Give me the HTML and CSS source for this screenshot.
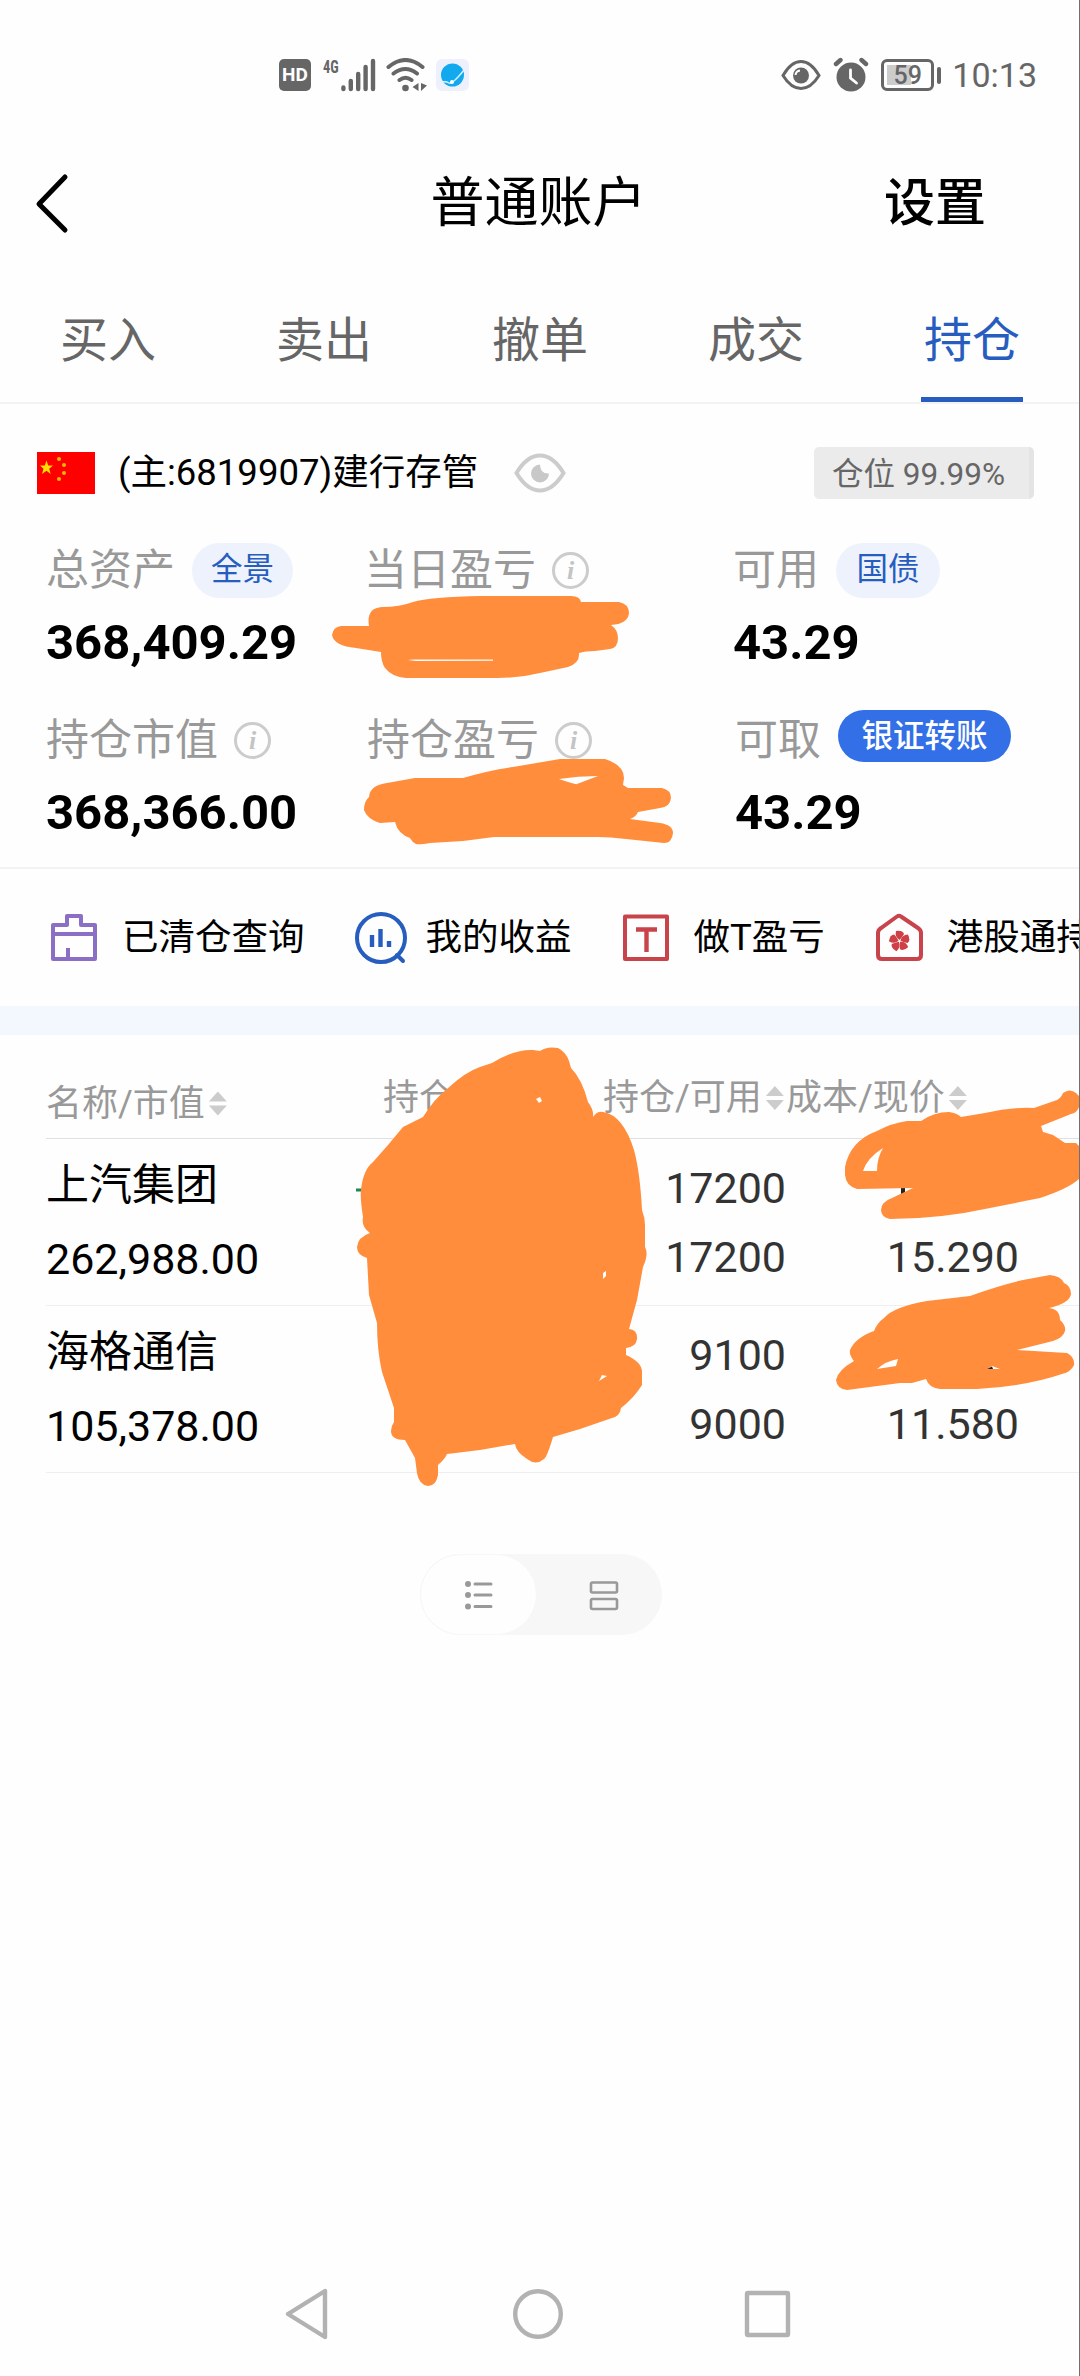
FILE: index.html
```html
<!DOCTYPE html>
<html lang="zh-CN">
<head>
<meta charset="utf-8">
<title>普通账户</title>
<link rel="stylesheet" href="styles.css">
</head>
<body>
<div class="screen">
  <div class="statusbar">
    <div class="status-left">
      <span class="hd">HD</span>
      <div class="signal">
        <span class="net">4G</span>
        <svg width="36" height="34" viewBox="0 0 36 34" stroke="#666" stroke-width="4.4" stroke-linecap="round"><path d="M2.4 29.5V31M9.8 23V31M17.2 16V31M24.6 9V31M32 3V31"/></svg>
      </div>
      <svg class="wifi" width="42" height="34" viewBox="0 0 42 34" fill="none" stroke="#666" stroke-width="4" stroke-linecap="round"><path d="M2.5 9Q19.500-5 36.500 9M7.500 15.500Q19.500 6.500 31 15.500M13.500 22Q19.500 17.500 25.500 22"/><circle cx="19.500" cy="30" r="3.300" fill="#666" stroke="none"/><path d="M32.500 25V33L26.500 29ZM35 25V33L41 27.500Z" fill="#666" stroke="none"/></svg>
      <svg class="app" width="34" height="34" viewBox="0 0 34 34"><rect x="0" y="1" width="33" height="32" rx="6" fill="#eef1fb"/><circle cx="16.500" cy="17" r="11.500" fill="#12a9ef"/><path d="M6 24Q10 23 13 25T28 12" fill="none" stroke="#d9f3ff" stroke-width="1.500"/><circle cx="16" cy="24" r="2" fill="#fff"/></svg>
    </div>
    <div class="status-right">
      <svg width="40" height="34" viewBox="0 0 40 34"><path d="M2 17.500Q10 3.500 20 3.500T38 17.500Q30 30.500 20 30.500T2 17.500Z" fill="none" stroke="#666" stroke-width="3"/><circle cx="20" cy="17.500" r="8" fill="#666"/><path d="M14.500 17Q15 13 19 12.500" fill="none" stroke="#fff" stroke-width="2"/></svg>
      <svg class="alarm" width="36" height="36" viewBox="0 0 36 36"><circle cx="18" cy="20" r="14.500" fill="#666"/><path d="M3 7L7.500 3M28.500 3L33 7" stroke="#666" stroke-width="4.400" stroke-linecap="round"/><path d="M17.500 13V21L23.500 26" fill="none" stroke="#fff" stroke-width="2.800" stroke-linecap="round"/></svg>
      <div class="battery"><span class="level">59</span></div>
      <span class="nub"></span>
      <span class="clock">10:13</span>
    </div>
  </div>

  <header class="titlebar">
    <svg class="back" width="36" height="62" viewBox="0 0 36 62" fill="none" stroke="#000" stroke-width="5" stroke-linecap="round" stroke-linejoin="round"><path d="M31 4L5 31L31 57"/></svg>
    <h1 class="title">普通账户</h1>
    <span class="settings">设置</span>
  </header>

  <nav class="tabs">
    <span class="tab">买入</span>
    <span class="tab">卖出</span>
    <span class="tab">撤单</span>
    <span class="tab">成交</span>
    <span class="tab tab-active">持仓</span>
  </nav>

  <section class="account">
    <svg class="flag" width="58" height="42" viewBox="0 0 58 42"><rect width="58" height="42" fill="#fe0000"/><path id="s" fill="#ffde00" d="M9.500 8.500L11.200 13.500H16L12.200 16.800L13.700 22L9.500 18.800L5 22L6.500 16.800L3 13.500H7.800Z"/><g fill="#f7b500"><circle cx="22" cy="7" r="2"/><circle cx="27" cy="13" r="2"/><circle cx="27" cy="21" r="2"/><circle cx="22" cy="27" r="2"/></g></svg>
    <span class="acct-name">(主:6819907)建行存管</span>
    <svg class="eye" width="52" height="40" viewBox="0 0 52 40"><path d="M2.500 20Q13 2.500 26 2.500T49.500 20Q39 37.500 26 37.500T2.500 20Z" fill="none" stroke="#ccc" stroke-width="4"/><path d="M26 11.500A9 9 0 1 0 35 20.500Q26 21 26 11.500Z" fill="#c8c8c8"/></svg>
    <span class="position">仓位 99.99%</span>
  </section>

  <section class="summary">
    <div class="cell">
      <div class="label">总资产<span class="pill">全景</span></div>
      <div class="amount">368,409.29</div>
    </div>
    <div class="cell cell-mid">
      <div class="label">当日盈亏<span class="info">i</span></div>
    </div>
    <div class="cell cell-end">
      <div class="label">可用<span class="pill pill-wide">国债</span></div>
      <div class="amount">43.29</div>
    </div>
  </section>
  <section class="summary summary-second">
    <div class="cell">
      <div class="label">持仓市值<span class="info info-near">i</span></div>
      <div class="amount">368,366.00</div>
    </div>
    <div class="cell cell-mid">
      <div class="label">持仓盈亏<span class="info">i</span></div>
    </div>
    <div class="cell cell-end">
      <div class="label">可取<span class="pill pill-solid">银证转账</span></div>
      <div class="amount">43.29</div>
    </div>
  </section>

  <section class="shortcuts">
    <div class="shortcut s1"><svg width="52" height="54" viewBox="0 0 52 54" fill="none" stroke="#8b6fc4" stroke-width="4" stroke-linejoin="round"><path d="M5 14H19V5H33V14H47V48H5ZM5 23H47M20 48V37"/></svg>已清仓查询</div>
    <div class="shortcut s2"><svg width="54" height="54" viewBox="0 0 54 54" fill="none" stroke="#265dbe" stroke-width="4"><circle cx="27" cy="27" r="24"/><path d="M43 44L49 50" stroke-linecap="round"/><path d="M18 24V36M26.500 18V36M35 30V36" stroke-width="4.400"/></svg>我的收益</div>
    <div class="shortcut s3"><svg width="52" height="54" viewBox="0 0 52 54" fill="none" stroke="#c8444a" stroke-width="4" stroke-linejoin="round"><rect x="5" y="5.500" width="42" height="42.500"/><path d="M16 18.500H37M26.500 18.500V41" stroke-width="4.400"/></svg>做T盈亏</div>
    <div class="shortcut s4"><svg width="52" height="54" viewBox="0 0 52 54"><path d="M5 22Q5 19 8 17L24 5.500Q26 4 28 5.500L45 17Q48 19 48 22V44Q48 48 44 48H9Q5 48 5 44Z" fill="none" stroke="#c8444a" stroke-width="4"/><g fill="#cf3f46" transform="translate(26.500 30)"><path id="petal" d="M0-1Q-5-4-3.500-10Q3-11 4.500-7Q3-4 0-1Z"/><use href="#petal" transform="rotate(72)"/><use href="#petal" transform="rotate(144)"/><use href="#petal" transform="rotate(216)"/><use href="#petal" transform="rotate(288)"/></g></svg>港股通持仓</div>
  </section>

  <section class="holdings">
    <div class="row head">
      <span class="c1">名称/市值<i class="sort"></i></span>
      <span class="c2">持仓盈亏</span>
      <span class="c3">持仓/可用<i class="sort"></i></span>
      <span class="c4">成本/现价<i class="sort"></i></span>
    </div>
    <div class="row item">
      <div class="c1"><div class="name">上汽集团</div><div class="value">262,988.00</div></div>
      <div class="c3"><div class="num">17200</div><div class="num">17200</div></div>
      <div class="c4"><div class="num"></div><div class="num">15.290</div></div>
    </div>
    <div class="row item">
      <div class="c1"><div class="name">海格通信</div><div class="value">105,378.00</div></div>
      <div class="c3"><div class="num">9100</div><div class="num">9000</div></div>
      <div class="c4"><div class="num"></div><div class="num">11.580</div></div>
    </div>
  </section>

  <div class="switch">
    <span class="seg seg-on"><svg width="30" height="32" viewBox="0 0 30 32" stroke="#999" stroke-width="3" stroke-linecap="round"><path d="M11 5H27M11 16H27M11 27.500H27"/><g fill="#999" stroke="none"><circle cx="4" cy="5" r="3"/><circle cx="4" cy="16" r="3"/><circle cx="4" cy="27.500" r="3"/></g></svg></span>
    <span class="seg"><svg width="30" height="32" viewBox="0 0 30 32" fill="none" stroke="#999" stroke-width="2.600"><rect x="2" y="3.500" width="26" height="10" rx="1.500"/><rect x="2" y="20" width="26" height="10" rx="1.500"/></svg></span>
  </div>

  <footer class="navbar">
    <svg width="56" height="56" viewBox="0 0 56 56"><path d="M8 28L45 5V51Z"/></svg>
    <svg width="56" height="56" viewBox="0 0 56 56"><circle cx="28" cy="28" r="22.800"/></svg>
    <svg width="56" height="56" viewBox="0 0 56 56"><rect x="7" y="7" width="41" height="42" rx="1"/></svg>
  </footer>

  <svg class="ink" width="1080" height="2376" viewBox="0 0 1080 2376">
    <path d="M356 1190H364" stroke="#1c8a53" stroke-width="3"/>
    <path d="M903 1186V1194" stroke="#222" stroke-width="4"/>
    <g fill="#ff8d3b" fill-rule="evenodd" stroke-linejoin="round">
      <path d="M332 635Q333 627 341 626H369Q366 608 382 607Q400 607 413 602Q430 597 482 596H571Q580 596 581 602H619Q629 604 629 613Q628 624 611 625Q618 630 618 638Q618 648 610 649L595 651Q585 651 579 653Q580 663 568 667L540 673Q520 678 497 678H406Q392 677 385 668Q381 662 381 652L356 648Q334 646 332 635ZM408 660L416 661L493 660.700V659.500H413Z"/>
      <path d="M364 810Q364 801 369 797Q370 785 387 783L415 778H463Q490 770 513 767L560 759H605Q624 765 624 778L623 785L628 788H662Q671 790 671 798Q670 807 660 808L638 812Q636 817 630 819L660 823Q673 825 673 833Q672 843 664 843L626 839Q610 837 598 837H494L463 841L430 843Q420 845 416 844Q412 842 410 838Q398 834 395 822L380 823Q367 819 364 810ZM559 779Q576 785 577 784L598 776Q578 776 559 779Z"/>
      <path d="M492 1063Q515 1049 533 1050L540 1051Q547 1046 558 1048Q566 1052 569 1061L571 1068Q582 1079 588 1102Q594 1110 593 1117Q597 1111 603 1112Q623 1115 634 1150Q640 1172 642 1210Q645 1218 645 1225V1247Q649 1254 643 1267L637 1300L629 1329Q638 1330 637 1339Q636 1347 626 1348V1355Q642 1362 642 1372V1385Q634 1398 621 1408Q620 1416 612 1418L580 1429L553 1437Q547 1457 544 1459Q536 1466 527 1459Q516 1452 515 1444L480 1450L447 1454Q445 1459 438 1465V1475Q436 1486 428 1486Q419 1485 417 1473L415 1458L405 1440Q391 1440 391 1431Q391 1426 394 1422V1408L382 1372Q377 1350 377 1323L369 1295L367 1258Q357 1255 357 1247Q358 1237 370 1233Q361 1227 363 1217Q360 1198 361 1190Q363 1170 373 1162L388 1145L403 1127L423 1117Q435 1098 447 1089Q465 1072 480 1067ZM536 1099L539 1103L542 1101L540 1097ZM603 1273L603 1279L606 1276V1271ZM599 1381L607 1376L602 1375Z"/>
      <path d="M845 1167Q850 1141 877 1131Q892 1123 907 1121H921Q934 1112 949 1112Q957 1113 961 1117L985 1113Q1010 1107 1034 1108L1057 1100Q1061 1098 1063 1093Q1070 1088 1076 1093L1080 1097V1104Q1078 1113 1071 1114L1041 1126L1043 1132L1053 1135L1065 1143H1076L1080 1147V1178Q1070 1188 1040 1198L990 1208Q940 1219 890 1219Q881 1217 881 1210Q881 1202 892 1198L913 1188L857 1189Q846 1186 845 1175ZM863 1171Q867 1158 883 1148Q877 1158 877 1171Z"/>
      <path d="M836 1380Q838 1370 854 1361Q849 1355 850 1350Q855 1338 874 1331Q877 1323 884 1318Q893 1307 927 1301L970 1296Q1000 1285 1023 1280L1050 1275Q1061 1276 1064 1283Q1071 1286 1071 1294Q1070 1303 1049 1308Q1060 1309 1060 1320Q1066 1325 1065 1331Q1063 1338 1053 1341L1017 1350L1067 1353Q1075 1357 1074 1365Q1071 1372 1062 1374Q1027 1386 977 1389H940Q929 1388 926 1379L912 1383H900L847 1390Q837 1389 836 1380ZM877 1369Q886 1361 898 1359L896 1366ZM987 1369L992 1366L1000 1369Z"/>
    </g>
    <path d="M987 1369L992 1366.500L993 1369" fill="#222"/>
  </svg>
</div>
</body>
</html>
```
FILE: styles.css
```css
* { box-sizing: border-box; }
body { margin: 0; background: #fefefe; }
.screen {
  position: relative;
  width: 1080px;
  height: 2376px;
  overflow: hidden;
  display: flex;
  flex-direction: column;
  border-right: 1px solid #707070;
  background: #fefefe;
  color: #000;
  font-family: Roboto, "Noto Sans CJK SC", sans-serif;
  white-space: nowrap;
}
svg { display: block; flex: none; }

.statusbar {
  height: 150px;
  padding: 57px 42px 0 279px;
  display: flex;
  justify-content: space-between;
  align-items: flex-start;
  color: #666;
}
.status-left, .status-right { display: flex; align-items: center; height: 36px; }
.hd {
  width: 32px; height: 32px;
  border-radius: 5px;
  background: #666;
  color: #fff;
  font: 700 19px/32px Roboto, sans-serif;
  text-align: center;
}
.signal { display: flex; align-items: flex-start; margin-left: 12px; }
.net { width: 18px; font: 700 18px/18px "Roboto Condensed", Roboto, sans-serif; transform: scaleX(.8); transform-origin: left; }
.wifi { margin-left: 9px; }
.app { margin-left: 8px; }
.alarm { margin-left: 12px; }
.battery {
  width: 53px; height: 32px;
  margin-left: 12px;
  padding: 3px;
  border: 3px solid #666;
  border-radius: 6px;
}
.level {
  display: block;
  width: 41px; height: 20px;
  background: linear-gradient(90deg, #ccc 24px, transparent 24px);
  font: 500 25px/21px Roboto, sans-serif;
  text-align: center;
}
.nub { width: 4px; height: 17px; margin-left: 3px; border-radius: 2px; background: #666; }
.clock { margin-left: 11px; font-size: 34px; line-height: 36px; }

.titlebar {
  height: 130px;
  padding: 0 93px 22px 34px;
  display: grid;
  grid-template-columns: 300px 1fr 300px;
  align-items: center;
}
.title { margin: 0; padding-left: 57px; font-size: 54px; line-height: 80px; font-weight: 400; text-align: center; }
.settings { font-size: 51px; line-height: 80px; font-weight: 500; text-align: right; }

.tabs { height: 124px; display: flex; border-bottom: 2px solid #f3f3f3; margin-right: -1px; }
.tab {
  flex: 1;
  display: flex;
  flex-direction: column;
  align-items: center;
  padding-top: 26px;
  color: #666;
  font-size: 48px;
  line-height: 70px;
}
.tab-active { color: #265dbe; }
.tab-active::after { content: ""; width: 102px; height: 6px; margin-top: 21px; background: #265dbe; }

.account { height: 138px; padding: 43px 45px 43px 37px; display: flex; align-items: center; }
.flag { }
.acct-name { margin-left: 23px; font-size: 36.500px; line-height: 52px; }
.eye { margin-left: 36px; }
.position {
  width: 220px; height: 52px;
  margin-left: auto;
  padding-left: 18px;
  border-radius: 5px;
  background: linear-gradient(90deg, #ebebeb 215px, #e4e4e4 215px);
  color: #666;
  font-size: 31.500px;
  line-height: 56px;
}

.summary { display: grid; grid-template-columns: 318px 368px 1fr; padding-left: 46px; height: 170px; }
.summary-second { height: 155px; }
.cell { display: flex; flex-direction: column; }
.cell-end { padding-left: 1px; }
.summary-second .cell-mid, .summary-second .cell-end { padding-left: 3px; }
.label { display: flex; align-items: center; height: 56px; font-size: 43px; line-height: 56px; color: #999; }
.pill {
  width: 101px; height: 55px;
  margin-left: 17px;
  border-radius: 28px;
  background: #edf2fc;
  color: #265dbe;
  font-size: 31.500px;
  line-height: 54px;
  text-align: center;
}
.pill-wide { width: 104px; }
.pill-solid { width: 173px; height: 52px; margin-bottom: 8px; background: #336fe6; color: #fff; font-weight: 500; line-height: 53px; }
.info {
  width: 37px; height: 37px;
  margin-left: 16px;
  border: 3px solid #ccc;
  border-radius: 50%;
  color: #c4c4c4;
  font: italic 700 26px/31px "Liberation Serif", serif;
  text-align: center;
}
.amount { margin-top: 15px; font-size: 49px; line-height: 60px; font-weight: 700; }

.shortcuts {
  height: 168px;
  border-top: 2px solid #f3f3f3;
  border-bottom: 29px solid #f3f7fe;
  padding-left: 48px;
  display: flex;
  align-items: center;
  overflow: hidden;
  margin-right: -1px;
}
.shortcuts { padding-bottom: 0; }
.shortcut { display: flex; align-items: center; flex: none; gap: 22px; font-size: 36.500px; line-height: 54px; }
.s2 { margin-left: 49px; gap: 18px; }
.s3 { margin-left: 48px; }
.s4 { margin-left: 48px; }

.holdings { padding-left: 46px; margin-right: -1px; }
.row { display: grid; grid-template-columns: 310px 247px 183px 1fr; }
.head { height: 104px; border-bottom: 1px solid #e0e0e0; font-size: 36px; line-height: 50px; color: #999; padding-top: 23px; }
.head span { display: flex; align-items: center; }
.head .c1 { padding-top: 11px; }
.head .c2 { padding-left: 27px; }
.sort {
  width: 18px; height: 24px;
  margin-left: 4px;
  background: #ccc;
  clip-path: polygon(50% 0, 100% 42%, 0 42%, 0 58%, 100% 58%, 50% 100%, 0 58%, 0 42%);
}
.item { height: 167px; border-bottom: 1px solid #efefef; font-size: 43px; }
.item .c1 { grid-column: 1; padding-top: 16px; }
.item .c3 { grid-column: 3; }
.item .c4 { grid-column: 4; padding-right: 61px; }
.item .c3, .item .c4 { padding-top: 15px; color: #333; text-align: right; }
.name { line-height: 60px; }
.value { line-height: 60px; margin-top: 14px; }
.num { height: 69px; line-height: 69px; }

.switch { display: flex; width: 242px; height: 81px; margin: 81px 0 0 420px; border-radius: 41px; background: #f7f7f7; }
.seg { flex: 1; display: flex; align-items: center; justify-content: center; padding-left: 8px; }
.seg-on { flex: 0 0 117px; padding-left: 0; border: 1px solid #f7f7f7; border-radius: 41px; background: #fefefe; }

.navbar { margin-top: auto; height: 92px; padding: 2px 283px 0 280px; display: flex; justify-content: space-between; }
.navbar svg { fill: none; stroke: #b2b2b2; stroke-width: 4.400; stroke-linejoin: round; }

.ink { position: absolute; left: 0; top: 0; pointer-events: none; }
```
